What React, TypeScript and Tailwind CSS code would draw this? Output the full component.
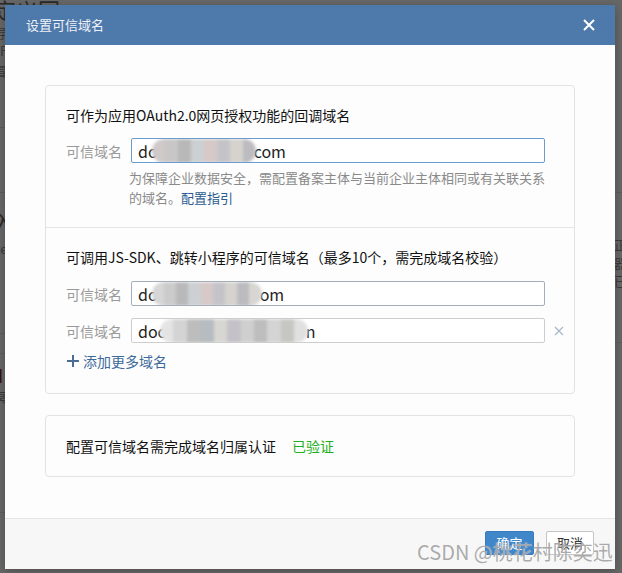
import React from "react";

const FONT = '"Noto Sans CJK SC", "Microsoft YaHei", "Noto Sans", sans-serif';

function Blob({ w, colors }: { w: number; colors: string[] }) {
  const cw = w / colors.length;
  return (
    <span
      className="relative inline-block h-[24px] align-middle rounded-full overflow-hidden blur-[1.5px]"
      style={{ width: w }}
    >
      <span className="flex h-full w-full">
        {colors.map((c, i) => (
          <span key={i} className="h-full" style={{ width: cw, background: c }} />
        ))}
      </span>
    </span>
  );
}

function DomainInput({
  pre,
  post,
  blobW,
  colors,
  border,
  removable,
}: {
  pre: string;
  post: string;
  blobW: number;
  colors: string[];
  border: string;
  removable?: boolean;
}) {
  return (
    <div className="flex items-center">
      <div className="w-[65px] shrink-0 text-[14px] leading-[20px] text-[#9a9a9a]">可信域名</div>
      <div
        className={`flex h-[25px] w-[414px] shrink-0 items-center overflow-hidden rounded-[2px] border bg-white pl-[6px] text-[16px] leading-[20px] text-[#222] ${border}`}
      >
        <span>{pre}</span>
        <span className="-ml-[6px] -mr-[2px] inline-flex">
          <Blob w={blobW} colors={colors} />
        </span>
        <span>{post}</span>
      </div>
      {removable && (
        <svg className="ml-[9px] shrink-0" width="10" height="10" viewBox="0 0 10 10">
          <path d="M1 1 L9 9 M9 1 L1 9" stroke="#a9b9cc" strokeWidth="1.3" fill="none" />
        </svg>
      )}
    </div>
  );
}

export default function App() {
  return (
    <div
      className="relative h-[573px] w-[622px] overflow-hidden bg-[#676767]"
      style={{ fontFamily: FONT }}
    >
      {/* background page under overlay */}
      <div className="absolute inset-0 text-[#2a2a2a]">
        <div className="absolute left-[-6px] top-[-4px] text-[22px] leading-[26px]">定义回</div>
        <div className="absolute left-[-6px] top-[24px] text-[13px] leading-[18px] text-[#3a3a3a]">导</div>
        <div className="absolute left-[0px] top-[42px] text-[13px] leading-[18px] text-[#3a3a3a]">F</div>
        <div className="absolute left-[-6px] top-[62px] text-[13px] leading-[18px] text-[#3a3a3a]">冒</div>
        <div className="absolute left-0 top-[127px] h-px w-[6px] bg-[#5c5c5c]" />
        <div className="absolute left-0 top-[192px] h-px w-full bg-[#5c5c5c]" />
        <div className="absolute left-[-8px] top-[208px] text-[22px] leading-[26px]">入</div>
        <div className="absolute left-[-6px] top-[240px] text-[13px] leading-[18px] text-[#3a3a3a]">ce</div>
        <div className="absolute left-0 top-[333px] h-px w-[6px] bg-[#5c5c5c]" />
        <div className="absolute left-0 top-[353px] h-px w-[6px] bg-[#5c5c5c]" />
        <div className="absolute left-[-2px] top-[364px] text-[18px] leading-[22px] text-[#3a1010]">I</div>
        <div className="absolute left-[-6px] top-[388px] text-[13px] leading-[18px] text-[#3a3a3a]">冥</div>
        <div className="absolute left-0 top-[512px] h-px w-[6px] bg-[#5c5c5c]" />
        <div className="absolute left-[614px] top-[236px] text-[13px] leading-[18px] text-[#3a3a3a]">正</div>
        <div className="absolute left-[614px] top-[254px] text-[13px] leading-[18px] text-[#3a3a3a]">器</div>
        <div className="absolute left-[614px] top-[272px] text-[13px] leading-[18px] text-[#3a3a3a]">已</div>
        <div className="absolute left-[614px] top-[342px] h-px w-[8px] bg-[#5c5c5c]" />
      </div>

      {/* dialog */}
      <div className="absolute left-[5px] top-[5px] flex w-[610px] flex-col bg-white shadow-[0_2px_8px_rgba(0,0,0,0.25)]">
        {/* header */}
        <div className="flex h-[40px] items-center justify-between bg-[#4e79ab] pl-[21px] pr-[20px]">
          <span className="text-[13px] leading-[18px] text-[#eef2f8]">设置可信域名</span>
          <svg width="12" height="12" viewBox="0 0 12 12">
            <path d="M1 1 L11 11 M11 1 L1 11" stroke="#ffffff" strokeWidth="2" fill="none" />
          </svg>
        </div>

        {/* body */}
        <div className="flex flex-col gap-[21px] bg-[#fdfdfd] px-[40px] pb-[41px] pt-[40px]">
          <div className="flex flex-col rounded-[4px] border border-[#e3e3e3] bg-[#fdfdfd]">
            <div className="flex flex-col px-[20px] pb-[19px] pt-[19px]">
              <div className="text-[14px] leading-[20px] text-[#111]">
                可作为应用OAuth2.0网页授权功能的回调域名
              </div>
              <div className="mt-[13px]">
                <DomainInput
                  pre="do"
                  post="com"
                  blobW={104}
                  colors={["#cfc9c9", "#c8c6c6", "#b8b8b8", "#ccd0d2", "#d6c9c8", "#c4c4c8", "#d6d3ce", "#bcbcc0"]}
                  border="border-[#6b9bd0]"
                />
              </div>
              <div className="mt-[5px] pl-[63px] text-[13px] leading-[20px] text-[#8a8a8a]">
                为保障企业数据安全，需配置备案主体与当前企业主体相同或有关联关系的域名。
                <span className="text-[#2b5b8f]">配置指引</span>
              </div>
            </div>
            <div className="h-px bg-[#e6e6e6]" />
            <div className="flex flex-col px-[20px] pb-[22px] pt-[19px]">
              <div className="text-[14px] leading-[20px] text-[#111]">
                可调用JS-SDK、跳转小程序的可信域名（最多10个，需完成域名校验）
              </div>
              <div className="mt-[14px] flex flex-col gap-[12px]">
                <DomainInput
                  pre="do"
                  post="om"
                  blobW={110}
                  colors={["#d6d6d6", "#cbcbcb", "#b9b9b9", "#ccd0d2", "#d6c9c8", "#c4c4c8", "#d6d3ce", "#bcbcc0", "#d8d6d2"]}
                  border="border-[#a4aebb]"
                />
                <DomainInput
                  pre="doc"
                  post="n"
                  blobW={148}
                  colors={["#e4e4e4", "#d4d4d4", "#bdbdbd", "#b6bcbf", "#d8d6d2", "#c4c2c8", "#cfcfcf", "#bdbdbd", "#d4d4d4", "#c6c6c2", "#e0e0e0"]}
                  border="border-[#cdcdcd]"
                  removable
                />
              </div>
              <div className="mt-[8px] flex items-center gap-[4px] pl-[1px] text-[14px] leading-[20px] text-[#3d6a9a]">
                <svg width="12" height="12" viewBox="0 0 12 12">
                  <path d="M6 0 V12 M0 6 H12" stroke="#4a6d93" strokeWidth="2" fill="none" />
                </svg>
                <span>添加更多域名</span>
              </div>
            </div>
          </div>

          <div className="flex items-center gap-[16px] rounded-[4px] border border-[#e3e3e3] bg-[#fdfdfd] px-[20px] pb-[20px] pt-[20px]">
            <span className="text-[14px] leading-[20px] text-[#111]">配置可信域名需完成域名归属认证</span>
            <span className="text-[14px] leading-[20px] text-[#1eb01e]">已验证</span>
          </div>
        </div>

        {/* footer */}
        <div className="flex h-[51px] items-start justify-end gap-[12px] border-t border-[#e4e4e4] bg-[#f7f7f7] pr-[21px] pt-[12px]">
          <button className="h-[24px] w-[49px] rounded-[2px] border border-[#3a7bbf] bg-[#3f87c9] text-[13px] leading-[20px] text-white">
            确定
          </button>
          <button className="h-[24px] w-[48px] rounded-[2px] border border-[#c4c4c4] bg-white text-[13px] leading-[20px] text-[#333]">
            取消
          </button>
        </div>
      </div>

      {/* watermark */}
      <div
        className="pointer-events-none absolute left-[417px] top-[538px] whitespace-nowrap text-[20px] leading-[28px] text-[#9b9b9b]/85"
        style={{ textShadow: "0 0 1px rgba(255,255,255,0.8)" }}
      >
        CSDN @桃花村陈奕迅
      </div>
    </div>
  );
}
